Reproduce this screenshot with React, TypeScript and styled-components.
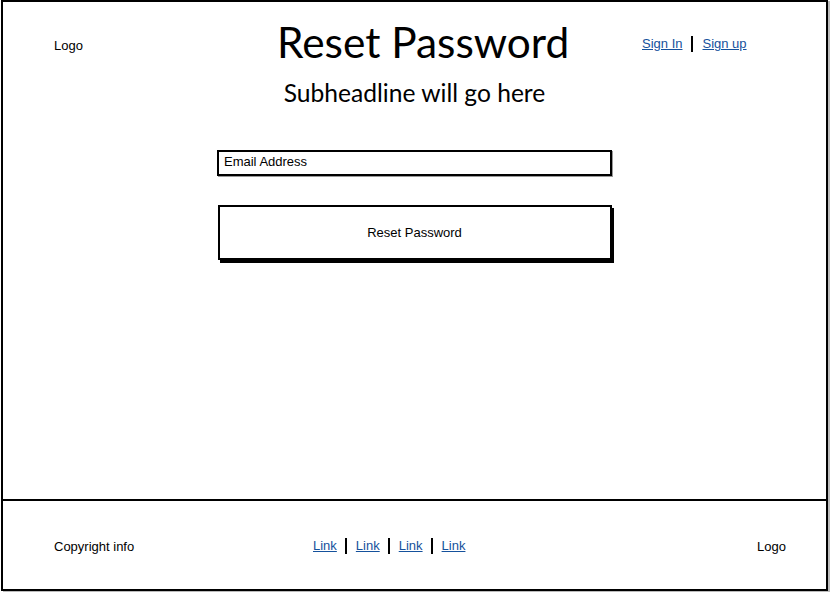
import React from "react";
import styled, { createGlobalStyle } from "styled-components";

const Global = createGlobalStyle`
  html, body { margin: 0; padding: 0; background: #fff; }
  body { width: 830px; height: 593px; overflow: hidden; font-family: "Liberation Sans", Arial, sans-serif; color: #000; }
`;

const Frame = styled.div`
  box-sizing: border-box;
  margin-left: 1px;
  width: 827px;
  height: 591px;
  border: 2px solid #000;
  box-shadow: 2px 1px 0 #bbb;
  display: flex;
  flex-direction: column;
`;

const Main = styled.main`
  height: 497px;
  display: flex;
  flex-direction: column;
  align-items: center;
`;

const Header = styled.header`
  width: 100%;
  box-sizing: border-box;
  display: grid;
  grid-template-columns: 223px 290px 1fr;
  align-items: center;
  padding: 17px 0 0 51px;
  height: 63px;
`;

const SmallText = styled.span`
  font-size: 13px;
  line-height: 16px;
`;

const HeadLogo = styled(SmallText)`
  margin-top: 8px;
`;

const Title = styled.h1`
  margin: 0;
  font-family: Lato, "Noto Sans", sans-serif;
  font-weight: 400;
  font-size: 42.4px;
  line-height: 46px;
  white-space: nowrap;
`;

const Auth = styled.nav`
  display: flex;
  align-items: center;
  gap: 9px;
  padding-left: 75px;
  margin-top: 4px;
`;

const A = styled.a`
  font-size: 13px;
  line-height: 16px;
  color: #15519c;
  text-decoration: underline;
`;

const Bar = styled.span`
  display: inline-block;
  width: 2px;
  height: 16px;
  background: #000;
`;

const Sub = styled.h2`
  margin: 14px 0 0;
  font-family: Lato, "Noto Sans", sans-serif;
  font-weight: 400;
  font-size: 24.6px;
  line-height: 28px;
`;

const Input = styled.div`
  box-sizing: border-box;
  margin-top: 43px;
  width: 395px;
  height: 26px;
  border: 2px solid #000;
  padding: 1px 5px;
  font-size: 13px;
  line-height: 18px;
  box-shadow: 1px 1px 0 #999;
`;

const Button = styled.div`
  box-sizing: border-box;
  margin-top: 29px;
  width: 394px;
  height: 55px;
  border: 2px solid #000;
  box-shadow: 2px 3px 0 #000;
  display: flex;
  align-items: center;
  justify-content: center;
  font-size: 13px;
`;

const Footer = styled.footer`
  flex: 1;
  border-top: 2px solid #000;
  display: grid;
  grid-template-columns: 259px 1fr 130px;
  align-items: center;
  padding: 4px 0 0 51px;
  box-sizing: border-box;
`;

const Links = styled.nav`
  display: flex;
  align-items: center;
  gap: 8px;
  margin-top: -2px;
  & > span { margin: 0 0.5px; }
`;

const FootLogo = styled(SmallText)`
  padding-left: 61px;
`;

export default function App() {
  return (
    <>
      <Global />
      <Frame>
        <Main>
          <Header>
            <HeadLogo>Logo</HeadLogo>
            <Title>Reset Password</Title>
            <Auth>
              <A href="#">Sign In</A>
              <Bar />
              <A href="#">Sign up</A>
            </Auth>
          </Header>
          <Sub>Subheadline will go here</Sub>
          <Input>Email Address</Input>
          <Button>Reset Password</Button>
        </Main>
        <Footer>
          <SmallText>Copyright info</SmallText>
          <Links>
            <A href="#">Link</A>
            <Bar />
            <A href="#">Link</A>
            <Bar />
            <A href="#">Link</A>
            <Bar />
            <A href="#">Link</A>
          </Links>
          <FootLogo>Logo</FootLogo>
        </Footer>
      </Frame>
    </>
  );
}
